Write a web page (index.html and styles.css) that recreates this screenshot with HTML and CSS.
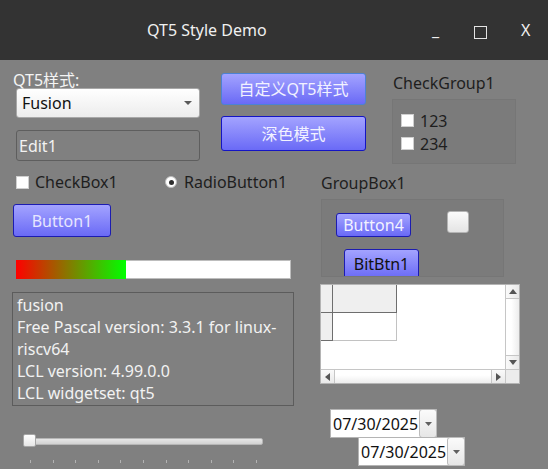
FILE: index.html
```html
<!DOCTYPE html>
<html lang="zh">
<head>
<meta charset="utf-8">
<title>QT5 Style Demo</title>
<link rel="stylesheet" href="styles.css">
</head>
<body>
<div class="window">
  <header class="titlebar">
    <span class="title">QT5 Style Demo</span>
    <span class="tb-min">_</span>
    <span class="tb-max"></span>
    <span class="tb-close">X</span>
  </header>
  <main class="form">
    <section class="row-top">
      <div class="style-block">
        <div class="light-label">QT5样式:</div>
        <div class="combo">
          <span>Fusion</span>
          <svg class="combo-arrow" width="8" height="4" viewBox="0 0 8 4"><polygon points="0,0 8,0 4,4" fill="#5a5a5a"/></svg>
        </div>
        <div class="edit">Edit1</div>
      </div>
      <div class="button-block">
        <button class="qbtn btn-custom">自定义QT5样式</button>
        <button class="qbtn btn-dark">深色模式</button>
      </div>
      <div class="checkgroup-block">
        <div class="dark-label">CheckGroup1</div>
        <div class="frame checkgroup">
          <div class="check"><span class="box"></span><span>123</span></div>
          <div class="check"><span class="box"></span><span>234</span></div>
        </div>
      </div>
    </section>
    <section class="row-bottom">
      <div class="left-col">
        <div class="check-row">
          <div class="check check-main"><span class="box"></span><span>CheckBox1</span></div>
          <div class="radio"><span class="radio-ring"><span class="radio-dot"></span></span><span>RadioButton1</span></div>
        </div>
        <button class="qbtn btn1">Button1</button>
        <div class="progress">
          <div class="progress-fill" style="width:110px"></div>
          <div class="progress-rest"></div>
        </div>
        <div class="memo">
          <div>fusion</div>
          <div>Free Pascal version: 3.3.1 for linux-riscv64</div>
          <div>LCL version: 4.99.0.0</div>
          <div>LCL widgetset: qt5</div>
        </div>
        <div class="slider"><span class="handle"></span></div>
        <div class="ticks">
          <span></span><span></span><span></span><span></span><span></span><span></span>
          <span></span><span></span><span></span><span></span><span></span>
        </div>
      </div>
      <div class="right-col">
        <div class="dark-label groupbox-label">GroupBox1</div>
        <div class="frame groupbox">
          <div class="gb-row">
            <button class="qbtn btn4">Button4</button>
            <span class="toggle"></span>
          </div>
          <button class="qbtn bitbtn">BitBtn1</button>
        </div>
        <div class="grid">
          <div class="cells">
            <div class="gc fixed"></div>
            <div class="gc fixed"></div>
            <div class="gc fixed"></div>
            <div class="gc normal"></div>
          </div>
          <div class="vscroll">
            <span class="sb-btn sb-up"><svg width="8" height="5" viewBox="0 0 8 5"><polygon points="0,5 8,5 4,0" fill="#555"/></svg></span>
            <span class="sb-track"></span>
            <span class="sb-btn sb-down"><svg width="8" height="5" viewBox="0 0 8 5"><polygon points="0,0 8,0 4,5" fill="#555"/></svg></span>
          </div>
          <div class="hscroll">
            <span class="sb-btn sb-left"><svg width="5" height="8" viewBox="0 0 5 8"><polygon points="5,0 5,8 0,4" fill="#555"/></svg></span>
            <span class="sb-track"></span>
            <span class="sb-btn sb-right"><svg width="5" height="8" viewBox="0 0 5 8"><polygon points="0,0 0,8 5,4" fill="#555"/></svg></span>
          </div>
          <div class="corner"></div>
        </div>
        <div class="dtp dtp1">
          <span class="dtp-text">07/30/2025</span>
          <span class="dtp-btn"><svg width="7" height="4" viewBox="0 0 7 4"><polygon points="0,0 7,0 3.5,4" fill="#606060"/></svg></span>
        </div>
        <div class="dtp dtp2">
          <span class="dtp-text">07/30/2025</span>
          <span class="dtp-btn"><svg width="7" height="4" viewBox="0 0 7 4"><polygon points="0,0 7,0 3.5,4" fill="#606060"/></svg></span>
        </div>
      </div>
    </section>
  </main>
</div>
</body>
</html>
```
FILE: styles.css
```css
* { box-sizing: border-box; }
html, body { margin: 0; padding: 0; }
body {
  width: 548px;
  height: 469px;
  overflow: hidden;
  background: #808080;
  font-family: "Noto Sans", "Noto Sans CJK SC", sans-serif;
  font-size: 16px;
  line-height: 22px;
}
.window {
  width: 548px;
  height: 469px;
  display: flex;
  flex-direction: column;
}

/* title bar */
.titlebar {
  height: 60px;
  flex: none;
  background: #333333;
  color: #f0f0f0;
  display: flex;
  align-items: center;
  padding-left: 147px;
}
.title { width: 285px; }
.tb-min { width: 42px; }
.tb-max {
  width: 13px;
  height: 13px;
  border: 1px solid #e4e4e4;
  margin: 4px 34px 0 0;
}
.tb-close { }

/* form */
.form {
  flex: 1;
  background: #808080;
  overflow: hidden;
  display: flex;
  flex-direction: column;
}
.row-top {
  height: 110px;
  flex: none;
  display: flex;
  align-items: flex-start;
}
.row-bottom {
  flex: none;
  display: flex;
  align-items: flex-start;
}

.light-label { padding-left: 1px; color: #f4f4f4; }
.dark-label { padding-left: 1px; color: #1e1e1e; }

.style-block { margin: 9px 0 0 12px; width: 188px; }
.combo {
  margin: -3px 0 0 4px;
  width: 184px;
  height: 30px;
  border: 1px solid #a8a8a8;
  border-radius: 3px;
  background: linear-gradient(#ffffff, #ececec);
  display: flex;
  align-items: center;
  justify-content: space-between;
  padding: 0 7px 0 5px;
  color: #111111;
}
.combo-arrow { display: block; }
.edit {
  margin: 12px 0 0 4px;
  width: 184px;
  height: 31px;
  border: 1px solid #5e5e5e;
  border-radius: 3px;
  padding-left: 2px;
  color: #f2f2f2;
  display: flex;
  align-items: center;
}

/* blue buttons */
.qbtn {
  font: inherit;
  line-height: 22px;
  padding: 0;
  border: 1px solid #1c1cb0;
  border-radius: 3px;
  background: linear-gradient(#a3a3ff, #6a6af6);
  color: #f2f2ff;
  display: flex;
  align-items: center;
  justify-content: center;
  flex: none;
}
.button-block {
  margin: 13px 0 0 21px;
  width: 145px;
  display: flex;
  flex-direction: column;
}
.btn-custom { height: 32px; border-color: #4c82d4; }
.btn-dark { height: 35px; margin-top: 11px; border-color: #1414c4; }

/* checkgroup */
.checkgroup-block { margin: 12px 0 0 26px; width: 125px; }
.frame {
  background: #7b7b7b;
  border: 1px solid #767676;
}
.checkgroup {
  margin-top: 5px;
  width: 124px;
  height: 65px;
  padding: 9px 0 0 8px;
}
.check {
  height: 23px;
  display: flex;
  align-items: center;
  gap: 6px;
  color: #1e1e1e;
}
.box {
  width: 13px;
  height: 13px;
  flex: none;
  background: #ffffff;
  border: 1px solid #cfcfcf;
}

/* bottom left column */
.left-col {
  margin-left: 12px;
  width: 282px;
  display: flex;
  flex-direction: column;
  align-items: flex-start;
}
.check-row {
  height: 24px;
  display: flex;
  align-items: center;
  padding-left: 4px;
}
.check-main { width: 149px; height: 24px; }
.radio {
  display: flex;
  align-items: center;
  gap: 7px;
  color: #1e1e1e;
}
.radio-ring {
  width: 12px;
  height: 12px;
  border-radius: 50%;
  background: #ffffff;
  border: 1px solid #bdbdbd;
  display: flex;
  align-items: center;
  justify-content: center;
  flex: none;
}
.radio-dot {
  width: 5px;
  height: 5px;
  border-radius: 50%;
  background: #2e2e2e;
}
.btn1 { margin: 10px 0 0 1px; width: 98px; height: 33px; color: #e6e6ff; }
.progress {
  margin: 23px 0 0 4px;
  width: 275px;
  height: 19px;
  display: flex;
}
.progress-fill {
  height: 19px;
  background: linear-gradient(90deg, #ff0000, #00ff00);
  flex: none;
}
.progress-rest {
  flex: 1;
  background: #ffffff;
  border: 1px solid #bdbdbd;
  border-left: none;
}
.memo {
  margin-top: 13px;
  width: 282px;
  height: 114px;
  border: 1px solid #5c5c5c;
  padding: 1px 4px;
  color: #f2f2f2;
  overflow: hidden;
}
.slider {
  margin: 28px 0 0 11px;
  width: 240px;
  height: 13px;
  position: relative;
  display: flex;
}
.slider::before {
  content: "";
  position: absolute;
  left: 6px;
  right: 0;
  top: 4px;
  height: 5px;
  border: 1px solid #b6b6b6;
  border-radius: 2px;
  background: linear-gradient(#e6e6e6, #d2d2d2);
}
.handle {
  position: relative;
  width: 13px;
  height: 13px;
  border: 1px solid #a6a6a6;
  border-radius: 2px;
  background: linear-gradient(#ffffff, #e6e6e6);
}
.ticks {
  margin: 13px 0 0 18px;
  width: 227px;
  height: 3px;
  display: flex;
  justify-content: space-between;
}
.ticks span { width: 1px; height: 3px; background: #b2b2b2; }

/* bottom right column */
.right-col {
  margin-left: 26px;
  width: 200px;
  display: flex;
  flex-direction: column;
  align-items: flex-start;
}
.groupbox-label { margin-top: 2px; }
.groupbox {
  margin: 5px 0 0 1px;
  width: 183px;
  height: 78px;
  overflow: hidden;
}
.gb-row {
  display: flex;
  align-items: flex-start;
  padding-left: 14px;
}
.btn4 { margin-top: 13px; width: 75px; height: 24px; }
.toggle {
  margin: 11px 0 0 36px;
  width: 22px;
  height: 22px;
  border: 1px solid #b4b4b4;
  border-radius: 3px;
  background: linear-gradient(#fbfbfb, #e4e4e4);
}
.bitbtn { margin: 12px 0 0 22px; width: 75px; height: 30px; color: #111111; }

/* string grid */
.grid {
  margin-top: 7px;
  width: 200px;
  height: 100px;
  border: 1px solid #b4b4b4;
  background: #ffffff;
  display: grid;
  grid-template-columns: 1fr 14px;
  grid-template-rows: 1fr 14px;
}
.cells {
  display: grid;
  grid-template-columns: 12px 64px;
  grid-template-rows: 28px 28px;
  align-content: start;
}
.gc { border-right: 1px solid #6e6e6e; border-bottom: 1px solid #6e6e6e; }
.fixed { background: #efefef; }
.normal { background: #ffffff; border-color: #c2c2c2; }
.vscroll {
  display: flex;
  flex-direction: column;
  border-left: 1px solid #c6c6c6;
}
.hscroll {
  display: flex;
  border-top: 1px solid #c6c6c6;
}
.sb-btn {
  flex: none;
  display: flex;
  align-items: center;
  justify-content: center;
  background: linear-gradient(90deg, #fafafa, #e9e9e9);
}
.sb-btn svg { display: block; }
.vscroll .sb-btn { height: 14px; }
.hscroll .sb-btn { width: 14px; background: linear-gradient(#fafafa, #e9e9e9); }
.sb-up { border-bottom: 1px solid #c6c6c6; }
.sb-down { border-top: 1px solid #c6c6c6; }
.sb-left { border-right: 1px solid #c6c6c6; }
.sb-right { border-left: 1px solid #c6c6c6; }
.sb-track { flex: 1; }
.vscroll .sb-track { background: linear-gradient(90deg, #ffffff 40%, #ededed); }
.hscroll .sb-track { background: linear-gradient(#ffffff 40%, #ededed); }
.corner { background: #ececec; border-left: 1px solid #c6c6c6; border-top: 1px solid #c6c6c6; }

/* date pickers */
.dtp {
  width: 107px;
  height: 29px;
  background: #ffffff;
  border: 1px solid #b4b4b4;
  display: flex;
  color: #111111;
}
.dtp1 { margin: 25px 0 0 10px; }
.dtp2 { margin: -1px 0 0 38px; }
.dtp-text {
  flex: 1;
  padding-left: 2px;
  display: flex;
  align-items: center;
}
.dtp-btn {
  width: 18px;
  flex: none;
  display: flex;
  align-items: center;
  justify-content: center;
  border: 1px solid #bcbcbc;
  border-radius: 3px;
  background: linear-gradient(#fbfbfb, #e6e6e6);
  margin: -1px -1px -1px 0;
}
.dtp-btn svg { display: block; }
```
